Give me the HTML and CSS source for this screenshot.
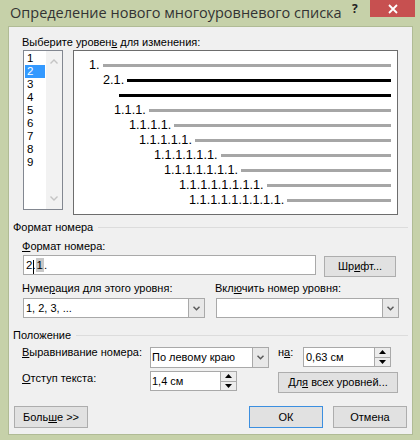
FILE: index.html
```html
<!DOCTYPE html>
<html lang="ru">
<head>
<meta charset="utf-8">
<title>Определение нового многоуровневого списка</title>
<link rel="stylesheet" href="styles.css">
</head>
<body>
<div class="window">
  <div class="titlebar">
    <div class="title">Определение нового многоуровневого списка</div>
    <div class="help">?</div>
    <div class="close">
      <svg width="10" height="10" viewBox="0 0 10 10"><path d="M1 1 L9 9 M9 1 L1 9" stroke="#fff" stroke-width="1.8" fill="none"/></svg>
    </div>
  </div>
  <div class="content">
    <div class="lbl lbl-top">Выберите уровен<u>ь</u> для изменения:</div>
    <div class="toprow">
      <div class="levels">
        <div class="items">
          <div class="it">1</div>
          <div class="it sel">2</div>
          <div class="it">3</div>
          <div class="it">4</div>
          <div class="it">5</div>
          <div class="it">6</div>
          <div class="it">7</div>
          <div class="it">8</div>
          <div class="it">9</div>
        </div>
        <div class="vscroll">
          <svg width="8" height="5" viewBox="0 0 8 5"><path d="M0.5 4.5 L4 1 L7.5 4.5" stroke="#c4c4c4" stroke-width="1.4" fill="none"/></svg>
          <svg width="8" height="5" viewBox="0 0 8 5"><path d="M0.5 0.5 L4 4 L7.5 0.5" stroke="#c4c4c4" stroke-width="1.4" fill="none"/></svg>
        </div>
      </div>
      <div class="preview">
        <div class="prow i1"><span class="num">1.</span><span class="bar"></span></div>
        <div class="prow i2"><span class="num">2.1.</span><span class="bar dark"></span></div>
        <div class="prow i3"><span class="bar dark"></span></div>
        <div class="prow i4"><span class="num">1.1.1.</span><span class="bar"></span></div>
        <div class="prow i5"><span class="num">1.1.1.1.</span><span class="bar"></span></div>
        <div class="prow i6"><span class="num">1.1.1.1.1.</span><span class="bar"></span></div>
        <div class="prow i7"><span class="num">1.1.1.1.1.1.</span><span class="bar"></span></div>
        <div class="prow i8"><span class="num">1.1.1.1.1.1.1.</span><span class="bar"></span></div>
        <div class="prow i9"><span class="num">1.1.1.1.1.1.1.1.</span><span class="bar"></span></div>
        <div class="prow i10"><span class="num">1.1.1.1.1.1.1.1.1.</span><span class="bar"></span></div>
      </div>
    </div>

    <div class="sect s1"><span>Формат номера</span><span class="sep"></span></div>
    <div class="lbl lbl-fmt"><u>Ф</u>ормат номера:</div>
    <div class="inrow">
      <div class="input">2<span class="caret">.</span><span class="shade">1</span>.</div>
      <div class="btn btn-font"><span>Шр<u>и</u>фт...</span></div>
    </div>
    <div class="grid2">
      <div class="glbl">Нуме<u>р</u>ация для этого уровня:</div>
      <div class="glbl">Вкл<u>ю</u>чить номер уровня:</div>
      <div class="select">
        <div class="val">1, 2, 3, ...</div>
        <div class="arrow"><svg width="7" height="5" viewBox="0 0 7 5"><path d="M0.5 0.8 L3.5 3.8 L6.5 0.8" stroke="#5a5a5a" stroke-width="1.5" fill="none"/></svg></div>
      </div>
      <div class="select">
        <div class="val"></div>
        <div class="arrow"><svg width="7" height="5" viewBox="0 0 7 5"><path d="M0.5 0.8 L3.5 3.8 L6.5 0.8" stroke="#5a5a5a" stroke-width="1.5" fill="none"/></svg></div>
      </div>
    </div>

    <div class="sect s2"><span>Положение</span><span class="sep"></span></div>
    <div class="rowA">
      <div class="rlbl"><u>В</u>ыравнивание номера:</div>
      <div class="select sel-align">
        <div class="val">По левому краю</div>
        <div class="arrow"><svg width="7" height="5" viewBox="0 0 7 5"><path d="M0.5 0.8 L3.5 3.8 L6.5 0.8" stroke="#5a5a5a" stroke-width="1.5" fill="none"/></svg></div>
      </div>
      <div class="na">н<u>а</u>:</div>
      <div class="spin spin-at">
        <div class="val">0,63 см</div>
        <div class="arrows">
          <div class="a"><svg width="7" height="4" viewBox="0 0 7 4"><path d="M0 4 L3.5 0 L7 4 Z" fill="#000"/></svg></div>
          <div class="a"><svg width="7" height="4" viewBox="0 0 7 4"><path d="M0 0 L3.5 4 L7 0 Z" fill="#000"/></svg></div>
        </div>
      </div>
    </div>
    <div class="rowB">
      <div class="rlbl"><u>О</u>тступ текста:</div>
      <div class="spin spin-indent">
        <div class="val">1,4 см</div>
        <div class="arrows">
          <div class="a"><svg width="7" height="4" viewBox="0 0 7 4"><path d="M0 4 L3.5 0 L7 4 Z" fill="#000"/></svg></div>
          <div class="a"><svg width="7" height="4" viewBox="0 0 7 4"><path d="M0 0 L3.5 4 L7 0 Z" fill="#000"/></svg></div>
        </div>
      </div>
      <div class="btn btn-all"><span>Дл<u>я</u> всех уровней...</span></div>
    </div>

    <div class="bottom">
      <div class="btn btn-more"><span>Боль<u>ш</u>е &gt;&gt;</span></div>
      <div class="btn btn-ok"><span>ОК</span></div>
      <div class="btn btn-cancel"><span>Отмена</span></div>
    </div>
  </div>
</div>
</body>
</html>
```

FILE: styles.css
```css
* { box-sizing: border-box; }
html, body { margin: 0; padding: 0; }
body {
  width: 420px;
  height: 440px;
  overflow: hidden;
  background: #c6d1a9;
  font-family: "Liberation Sans", Arial, sans-serif;
  font-size: 11px;
  color: #000;
}
u { text-decoration: underline; text-underline-offset: 1px; }

.window { width: 420px; height: 440px; display: flex; flex-direction: column; }

.titlebar { height: 26px; flex: none; display: flex; align-items: flex-start; }
.title {
  padding-left: 10px;
  font-family: "Open Sans", "Noto Sans", sans-serif;
  font-size: 14.5px;
  line-height: 26px;
  color: #333;
  white-space: nowrap;
}
.help {
  margin-left: auto;
  margin-right: 10px;
  margin-top: 2px;
  width: 8px;
  font-family: "Open Sans", "Noto Sans", sans-serif;
  font-size: 12px;
  font-weight: bold;
  line-height: 14px;
  color: #222;
}
.close {
  width: 45px;
  height: 17px;
  margin-right: 5px;
  background: #c75050;
  display: flex;
  align-items: center;
  justify-content: center;
}

.content {
  margin-left: 8px;
  width: 405px;
  height: 409px;
  background: #f0f0f0;
  border: 1px solid #b0bb95;
}

.lbl { line-height: 15px; white-space: nowrap; }
.lbl-top { margin: 8px 0 0 13px; height: 15px; }

.toprow { display: flex; align-items: flex-start; margin-left: 14px; height: 165px; }
.levels {
  width: 40px;
  height: 160px;
  border: 1px solid #828790;
  background: #fff;
  display: flex;
}
.items { width: 22px; padding: 1px 0 0 1px; }
.it { width: 20px; height: 13px; font-size: 11.5px; line-height: 13px; padding-left: 2px; }
.it.sel { background: #3399ff; color: #fff; }
.vscroll {
  flex: 1;
  background: #f2f2f2;
  display: flex;
  flex-direction: column;
  justify-content: space-between;
  align-items: center;
  padding: 8px 0;
}

.preview {
  margin-left: 10px;
  width: 325px;
  height: 165px;
  border: 1px solid #6d6d6d;
  background: #fff;
  padding: 7px 6px 0 0;
}
.prow { display: flex; align-items: center; height: 15px; }
.num {
  font-size: 12.7px;
  line-height: 15px;
  white-space: nowrap;
  margin-right: 3px;
}
.bar { flex: 1; height: 3px; background: #a6a6a6; }
.bar.dark { background: #000; }
.i1 { padding-left: 15px; }
.i2 { padding-left: 29px; }
.i3 { padding-left: 45px; }
.i4 { padding-left: 40px; }
.i5 { padding-left: 55px; }
.i6 { padding-left: 65px; }
.i7 { padding-left: 80px; }
.i8 { padding-left: 90px; }
.i9 { padding-left: 105px; }
.i10 { padding-left: 115px; }

.sect {
  display: flex;
  align-items: center;
  height: 14px;
  line-height: 14px;
  margin: 5px 4px 0 4px;
  white-space: nowrap;
}
.sect .sep { flex: 1; height: 1px; background: #dcdcdc; margin-left: 5px; }
.s2 { margin-top: 10px; }

.lbl-fmt { margin: 5px 0 0 13px; height: 16px; }

.inrow { display: flex; align-items: flex-start; margin-left: 14px; height: 22px; }
.input {
  width: 293px;
  height: 20px;
  border: 1px solid #a9a9a9;
  background: #fff;
  padding-left: 2px;
  font-size: 11.5px;
  line-height: 18px;
  white-space: nowrap;
}
.caret { position: relative; }
.caret::after {
  content: "";
  position: absolute;
  left: 1px;
  top: 1px;
  width: 1px;
  height: 14px;
  background: #000;
}
.shade { background: #c8c8c8; padding: 1px 1px; }

.btn {
  background: #e1e1e1;
  border: 1px solid #adadad;
  display: flex;
  align-items: center;
  justify-content: center;
  line-height: 15px;
  white-space: nowrap;
}
.btn-font { margin-left: 8px; margin-top: 1px; width: 72px; height: 21px; }

.grid2 {
  display: grid;
  grid-template-columns: 182px 183px;
  grid-template-rows: 17px 20px;
  column-gap: 11px;
  margin: 4px 0 0 14px;
}
.glbl { margin-left: -1px; line-height: 15px; white-space: nowrap; }

.select {
  display: flex;
  height: 20px;
  border: 1px solid #a9a9a9;
  background: #fff;
}
.select .val { flex: 1; padding-left: 2px; line-height: 18px; white-space: nowrap; }
.select .arrow {
  width: 16px;
  border-left: 1px solid #a9a9a9;
  background: #e8e8e8;
  display: flex;
  align-items: center;
  justify-content: center;
}

.rowA { display: flex; align-items: flex-start; margin: 5px 0 0 13px; height: 21px; }
.rowB { display: flex; align-items: flex-start; margin: 3px 0 0 13px; height: 22px; }
.rlbl { width: 128px; line-height: 15px; white-space: nowrap; }
.rowA .rlbl { margin-top: -2px; }
.sel-align { width: 119px; height: 21px; }
.sel-align .val { padding-left: 1px; line-height: 19px; }
.na { margin-left: 9px; width: 25px; margin-top: -2px; line-height: 15px; }

.spin {
  display: flex;
  height: 20px;
  border: 1px solid #a9a9a9;
  background: #fff;
}
.spin .val { flex: 1; padding-left: 2px; line-height: 18px; white-space: nowrap; }
.spin-at { width: 88px; }
.spin-indent { width: 87px; }
.spin-indent .val { padding-left: 1px; }
.arrows { width: 16px; display: flex; flex-direction: column; border-left: 1px solid #a9a9a9; }
.arrows .a {
  flex: 1;
  display: flex;
  align-items: center;
  justify-content: center;
  background: #ececec;
}
.arrows .a + .a { border-top: 1px solid #a9a9a9; }

.btn-all { margin-left: 41px; margin-top: 1px; width: 120px; height: 21px; }

.bottom { display: flex; margin: 13px 5px 0 5px; }
.bottom .btn { width: 74px; height: 22px; }
.btn-ok { margin-left: auto; border-color: #3c8fe0; }
.btn-cancel { margin-left: 10px; }
```
